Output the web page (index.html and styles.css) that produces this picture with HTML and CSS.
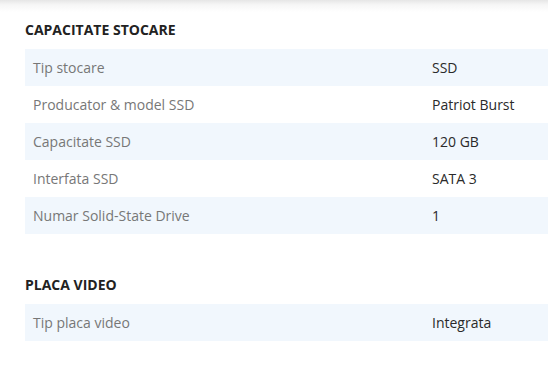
FILE: index.html
```html
<!DOCTYPE html>
<html lang="ro">
<head>
<meta charset="utf-8">
<link rel="stylesheet" href="styles.css">
</head>
<body>
<div class="topbar"></div>
<div class="content">
  <section class="spec">
    <h3 class="spec-title">CAPACITATE STOCARE</h3>
    <div class="spec-table">
      <div class="row alt"><span class="label">Tip stocare</span><span class="value">SSD</span></div>
      <div class="row"><span class="label">Producator &amp; model SSD</span><span class="value">Patriot Burst</span></div>
      <div class="row alt"><span class="label">Capacitate SSD</span><span class="value">120 GB</span></div>
      <div class="row"><span class="label">Interfata SSD</span><span class="value">SATA 3</span></div>
      <div class="row alt"><span class="label">Numar Solid-State Drive</span><span class="value">1</span></div>
    </div>
  </section>
  <section class="spec second">
    <h3 class="spec-title">PLACA VIDEO</h3>
    <div class="spec-table">
      <div class="row alt"><span class="label">Tip placa video</span><span class="value">Integrata</span></div>
    </div>
  </section>
</div>
</body>
</html>
```
FILE: styles.css
```css
html, body {
  margin: 0;
  padding: 0;
  background: #fff;
  overflow: hidden;
}
body {
  font-family: "Open Sans", "Liberation Sans", sans-serif;
  width: 548px;
  height: 369px;
}
.topbar {
  height: 12px;
  background: linear-gradient(to bottom, #e6e6e6 0%, #f6f6f6 40%, #ffffff 100%);
}
.content {
  padding-left: 25px;
}
.spec-title {
  margin: 0;
  padding-top: 8px;
  height: 29px;
  font-size: 14px;
  font-weight: 700;
  line-height: 19px;
  color: #222;
}
.spec-table {
  display: flex;
  flex-direction: column;
}
.row {
  display: flex;
  height: 37px;
  align-items: center;
  font-size: 14px;
}
.row.alt {
  background: #f1f7fd;
}
.label {
  width: 399px;
  padding-left: 8px;
  color: #777;
}
.value {
  color: #2a2a2a;
}
.second {
  margin-top: 33px;
}
```
